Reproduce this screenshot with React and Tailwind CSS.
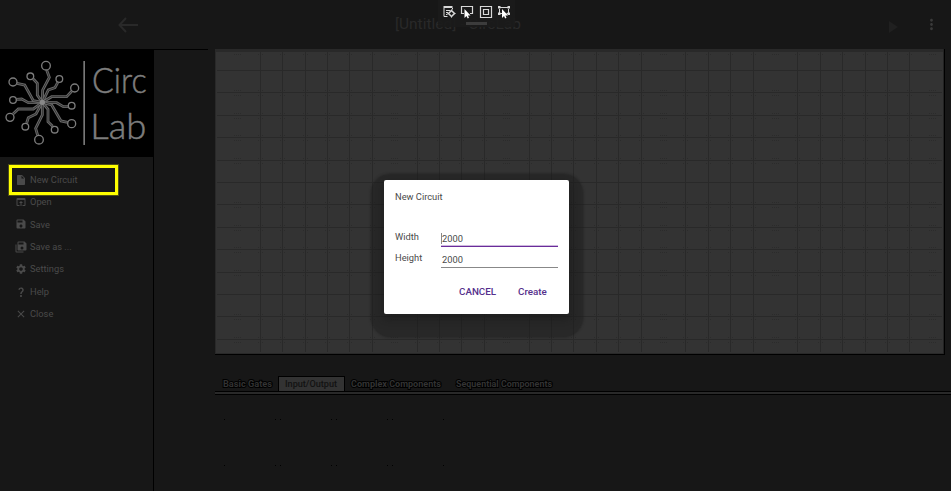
import React from "react";
import { MdClose, MdInsertDriveFile, MdMoreVert, MdOpenInBrowser, MdQuestionMark, MdSave, MdSettings } from "react-icons/md";

function SaveAllIcon({ className }) {
  return (
    <svg viewBox="0 0 24 24" fill="currentColor" className={className}>
      <path d="M17,7V3H7V7H17M14,17A3,3 0 0,0 17,14A3,3 0 0,0 14,11A3,3 0 0,0 11,14A3,3 0 0,0 14,17M19,1L23,5V17A2,2 0 0,1 21,19H7C5.89,19 5,18.1 5,17V3A2,2 0 0,1 7,1H19M1,7H3V21H17V23H3A2,2 0 0,1 1,21V7Z" />
    </svg>
  );
}

const MENU = [
  ["New Circuit", MdInsertDriveFile],
  ["Open", MdOpenInBrowser],
  ["Save", MdSave],
  ["Save as ...", SaveAllIcon],
  ["Settings", MdSettings],
  ["Help", MdQuestionMark],
  ["Close", MdClose],
];

// Each arm: end circle, radius, then the trace running to the hub.
const ARMS = [
  [138, 77, 13, "140,90 148,112 128,150 127,187"],
  [91, 109, 10, "100,117 112,130 112,165 127,187"],
  [178, 117, 10, "173,128 165,143 145,150 127,187"],
  [224, 144, 12, "215,154 200,170 155,170 127,187"],
  [215, 197, 10, "204,200 190,200 170,188 127,187"],
  [215, 251, 12, "203,247 183,243 155,195 127,187"],
  [164, 269, 10, "158,259 144,245 144,208 127,187"],
  [117, 299, 13, "113,286 107,265 127,225 127,187"],
  [76, 260, 10, "80,249 85,233 108,222 127,187"],
  [30, 232, 12, "39,222 55,207 100,207 127,187"],
  [39, 180, 10, "50,178 65,177 85,188 127,187"],
  [39, 126, 12, "51,130 74,135 100,182 127,187"],
];

function Logo() {
  return (
    <svg viewBox="0 27 459 324" className="block h-[108px] w-[153px] bg-black">
      {ARMS.map(([x, y, r, pts]) => (
        <g key={pts} fill="none">
          <polyline points={pts} stroke="#686868" strokeWidth="8.500" />
          <polyline points={pts} stroke="#2a2a2a" strokeWidth="2.500" />
          <circle cx={x} cy={y} r={r} fill="#000" stroke="#7c7c7c" strokeWidth="4" />
        </g>
      ))}
      <circle cx="127" cy="187" r="8" fill="#888" />
      <rect x="250" y="63" width="5" height="252" fill="#777" />
      <g fill="#7d7d7d" stroke="#7d7d7d" strokeWidth="1.500" fontFamily="Lato, sans-serif" fontWeight="300">
        <text x="276" y="159" fontSize="109" textLength="164" lengthAdjust="spacingAndGlyphs">Circ</text>
        <text x="271" y="296" fontSize="109" textLength="168" lengthAdjust="spacingAndGlyphs">Lab</text>
      </g>
    </svg>
  );
}

const COLS = Array.from({ length: 32 }, (_, i) => i + 1);
const ROWS = Array.from({ length: 14 }, (_, i) => i);
const HIDDEN = [1, 8, 13, 20, 25, 32];

function Grid() {
  return (
    <svg viewBox="0 0 729 305" shapeRendering="crispEdges" className="block h-[305px] w-[729px] bg-[#333333]">
      {COLS.filter((c) => !HIDDEN.includes(c)).map((c) => (
        <rect key={c} x={Math.floor(c * 22.4 + 0.5)} y="2" width="1" height="301" fill="#292929" />
      ))}
      {ROWS.slice(1).map((r) => (
        <rect key={r} x="2" y={Math.floor(r * 22.4 - 1)} width="725" height="1" fill="#292929" />
      ))}
      {ROWS.filter((r) => r % 5 !== 1).map((r) =>
        COLS.map((c) => {
          const x = Math.floor(c * 22.4 + 0.5);
          const y = r === 0 ? 2 : Math.floor(r * 22.4 - 1);
          const wide = HIDDEN.includes(c);
          return (
            <g key={r + "-" + c} fill="#2b2b2b">
              {(wide ? [-3, -1, 1, 3] : [-2, 2]).map((d) => (
                <React.Fragment key={d}>
                  <rect x={x + d} y={y - 2} width="1" height="1" />
                  <rect x={x + d} y={y + 3} width="1" height="1" />
                </React.Fragment>
              ))}
            </g>
          );
        })
      )}
      <rect x="0" y="0" width="729" height="3" fill="#292929" />
      <rect x="0" y="0" width="1" height="305" fill="#292929" />
      <rect x="0" y="304" width="729" height="1" fill="#292929" />
      <rect x="728" y="0" width="1" height="305" fill="#222222" />
    </svg>
  );
}

function DebugBar() {
  return (
    <div className="absolute left-[438px] top-0 flex h-[27px] w-[77px] flex-col items-center bg-[#1b1b1b]/90 pt-[5px]">
      <div className="flex gap-[4.5px] text-[#d8d8d8]">
        <svg viewBox="0 0 14 14" className="size-[14px]" fill="none" stroke="currentColor">
          <path d="M1.500 2h9" strokeWidth="2" />
          <path d="M2 3v8.500h3.500M4 5.500h4.500M4 7.500h2M4 9.500h1.500M10.500 3v1.500" />
          <path d="M9.500 5.500l3 3-3 3-3-3z" strokeWidth="1.500" />
          <path d="M9.500 4.500v1.500M9.500 11v1.500M5.500 8.500H7M12 8.500h1.500" />
        </svg>
        <svg viewBox="0 0 14 14" className="size-[14px]">
          <path d="M4 8.500H1.500v-7h11v7H10" fill="none" stroke="currentColor" strokeWidth="1.200" />
          <path d="M4.500 4v9l2-2 1.200 2.400 1.300-.6L7.900 10.400h2.600z" fill="#fff" />
        </svg>
        <svg viewBox="0 0 14 14" className="size-[14px]" fill="none" stroke="currentColor">
          <path d="M1.500 1.500h11v11h-11z" strokeWidth="1.200" />
          <path d="M4.500 4.500h5v5h-5z" strokeWidth="1.200" />
        </svg>
        <svg viewBox="0 0 14 14" className="size-[14px]">
          <path d="M3 2.500h8M2.500 4v4M11.500 4v4M3 8.500h2M9.500 8.500h1.500" fill="none" stroke="currentColor" />
          <path d="M1 1h2.500v2.500H1zM10.500 1H13v2.500h-2.500zM1 7.500h2.500V10H1zM10.500 7.500H13V10h-2.500z" fill="currentColor" />
          <path d="M5 4v9l2-2 1.200 2.400 1.300-.6L8.400 10.400H11z" fill="#fff" />
        </svg>
      </div>
      <div className="mt-[3px] h-[3px] w-[21px] bg-[#3c3c3c]" />
    </div>
  );
}

const TABS = ["Basic Gates", "Input/Output", "Complex Components", "Sequential Components"];
const TAB_WIDTHS = ["w-[63px] pl-[8px]", "w-[67px] border-x border-t border-black bg-[#333333] pl-[6px]", "w-[104px] pl-[6px]", "w-[120px] pl-[7px]"];
const TAB_TEXT = ["w-[49px]", "w-[52px]", "w-[90px]", "w-[96px]"];
const DOTS = [9, 60, 65, 116, 121, 172, 177, 228];

function Field({ label, active }) {
  return (
    <div className="flex h-[21px] items-start">
      <span className="w-[46px] leading-[12px]">{label}</span>
      <span className={active ? "h-[16px] w-[117px] border-b-[1.5px] border-[#6a2c9a] pt-px leading-[14px] shadow-[0_-1px_0_inset_#cdb8de]" : "h-[16px] w-[117px] border-b border-[#888] pt-px leading-[14px]"}>
        <span className={active ? "border-l border-[#888]" : "pl-px"}>2000</span>
      </span>
    </div>
  );
}

export default function App() {
  return (
    <div className="relative flex h-[491px] w-[951px] flex-col overflow-hidden bg-[#171717] font-[Roboto,sans-serif]">
      <header className="flex h-[49px] shrink-0 items-center text-[#292929]">
        <svg viewBox="0 0 20 16" className="ml-[118px] h-[16px] w-[20px]" fill="none" stroke="currentColor" strokeWidth="2">
          <path d="M20 8H1.500M8 1L1.500 8l6.500 7" />
        </svg>
        <h1 className="ml-[257px] w-[125px] whitespace-nowrap text-[15.5px] leading-none">[Untitled] - CircLab</h1>
        <svg viewBox="0 0 9 12" className="ml-[369px] mt-[4px] h-[12px] w-[9px] fill-[#202020]">
          <path d="M0 0l9 6-9 6z" />
        </svg>
        <MdMoreVert className="ml-[25px] size-[17px] text-[#3a3a3a]" />
      </header>

      <div className="flex min-h-0 flex-1">
        <aside className="w-[154px] shrink-0 border-r border-black">
          <Logo />
          <nav className="pt-[11.5px]">
            {MENU.map(([label, Icon]) => (
              <div key={label} className="flex h-[22.4px] items-center pl-[15px] text-[9.3px] text-[#4a4a4a]">
                <Icon className="mr-[3px] size-[12px]" />
                {label}
              </div>
            ))}
          </nav>
        </aside>
        <div className="flex w-[61px] shrink-0">
          <div className="h-px w-[54px] bg-black" />
        </div>
        <main className="flex min-w-0 flex-1 flex-col">
          <div className="w-[730px] border-b border-r border-black">
            <Grid />
          </div>
          <div className="mt-[21px] flex h-[15px]">
            {TABS.map((tab, i) => (
              <div key={tab} className={TAB_WIDTHS[i]}>
                <svg className={"block h-[14px] overflow-visible " + TAB_TEXT[i]}>
                  <text x="0" y={i === 1 ? 10 : 11} fontSize="9.500" fill={i === 1 ? "#121212" : "#333333"} stroke={i === 1 ? "none" : "#000"} strokeWidth="2" paintOrder="stroke" textLength={[49, 52, 90, 96][i]} lengthAdjust="spacingAndGlyphs" fontWeight={i === 1 ? 500 : 700}>{tab}</text>
                </svg>
              </div>
            ))}
          </div>
          <div className="h-[4px] shrink-0 border-y border-black bg-[#292929]" />
          <svg viewBox="0 0 300 90" shapeRendering="crispEdges" className="block h-[90px] w-[300px]">
            {DOTS.map((x) => (
              <g key={x}>
                <rect x={x} y="24" width="1" height="1" />
                <rect x={x} y="70" width="1" height="1" />
              </g>
            ))}
          </svg>
        </main>
      </div>

      <DebugBar />
      <div className="absolute left-[9px] top-[165px] h-[30px] w-[109px] border-[3px] border-[#ffff00] outline outline-1 outline-[#4e4e16]" />

      <div className="absolute left-[371px] top-[174px] h-[163px] w-[212px] rounded-[20px] bg-[#1e1e1e]/50 shadow-[0_0_2px_1px_rgba(30,30,30,0.4)]" />
      <div role="dialog" className="absolute left-[384px] top-[180px] h-[134px] w-[185px] rounded-[2px] bg-white pl-[11px] pt-[10px] text-[9.3px] text-[#4a4a4a] shadow-[0_4px_10px_2px_rgba(20,20,20,0.4)]">
        <h2 className="h-[41px] leading-[13px]">New Circuit</h2>
        <Field label="Width" active />
        <Field label="Height" />
        <div className="flex pl-[64px] pt-[12px] text-[9.8px] font-medium leading-[14px] text-[#55308c]">
          <button className="w-[59px] text-left">CANCEL</button>
          <button>Create</button>
        </div>
      </div>
    </div>
  );
}
